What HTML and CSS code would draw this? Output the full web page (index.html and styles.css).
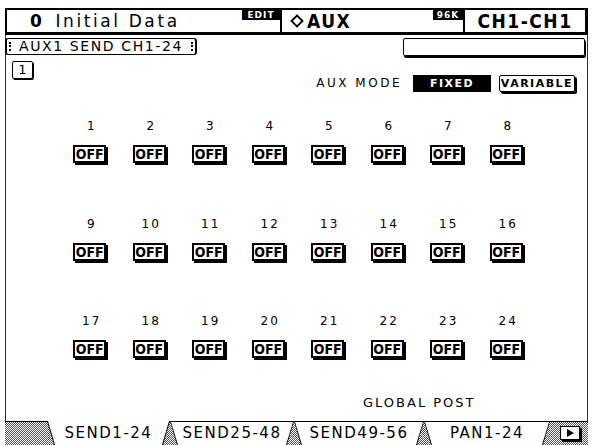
FILE: index.html
```html
<!DOCTYPE html>
<html>
<head>
<meta charset="utf-8">
<link rel="stylesheet" href="styles.css">
</head>
<body>
<div class="screen">
  <header class="hdr">
    <div class="seg seg-scene">
      <span class="scene-num">0</span><span class="scene-name">Initial Data</span>
      <span class="tag tag-edit">EDIT</span>
    </div>
    <div class="seg seg-func">
      <svg class="diamond" width="14" height="14" viewBox="0 0 14 14"><polygon points="7,1.5 12.5,7 7,12.5 1.5,7" fill="none" stroke="#000" stroke-width="1.8"/></svg>
      <span class="func">AUX</span>
      <span class="tag tag-96k">96K</span>
    </div>
    <div class="seg seg-ch"><span class="ch">CH1-CH1</span></div>
  </header>
  <main class="body">
    <div class="row-top">
      <div class="label-box"><span class="dots"></span><span class="label-text">AUX1 SEND CH1-24</span><span class="dots"></span></div>
      <div class="name-box"></div>
    </div>
    <div class="row-mode">
      <div class="page-box">1</div>
      <div class="mode">
        <span class="mode-label">AUX MODE</span>
        <span class="btn btn-on">FIXED</span>
        <span class="btn btn-off">VARIABLE</span>
      </div>
    </div>
    <div class="grid">
      <div class="cell"><span class="num">1</span><span class="off">OFF</span></div>
      <div class="cell"><span class="num">2</span><span class="off">OFF</span></div>
      <div class="cell"><span class="num">3</span><span class="off">OFF</span></div>
      <div class="cell"><span class="num">4</span><span class="off">OFF</span></div>
      <div class="cell"><span class="num">5</span><span class="off">OFF</span></div>
      <div class="cell"><span class="num">6</span><span class="off">OFF</span></div>
      <div class="cell"><span class="num">7</span><span class="off">OFF</span></div>
      <div class="cell"><span class="num">8</span><span class="off">OFF</span></div>
      <div class="cell"><span class="num">9</span><span class="off">OFF</span></div>
      <div class="cell"><span class="num">10</span><span class="off">OFF</span></div>
      <div class="cell"><span class="num">11</span><span class="off">OFF</span></div>
      <div class="cell"><span class="num">12</span><span class="off">OFF</span></div>
      <div class="cell"><span class="num">13</span><span class="off">OFF</span></div>
      <div class="cell"><span class="num">14</span><span class="off">OFF</span></div>
      <div class="cell"><span class="num">15</span><span class="off">OFF</span></div>
      <div class="cell"><span class="num">16</span><span class="off">OFF</span></div>
      <div class="cell"><span class="num">17</span><span class="off">OFF</span></div>
      <div class="cell"><span class="num">18</span><span class="off">OFF</span></div>
      <div class="cell"><span class="num">19</span><span class="off">OFF</span></div>
      <div class="cell"><span class="num">20</span><span class="off">OFF</span></div>
      <div class="cell"><span class="num">21</span><span class="off">OFF</span></div>
      <div class="cell"><span class="num">22</span><span class="off">OFF</span></div>
      <div class="cell"><span class="num">23</span><span class="off">OFF</span></div>
      <div class="cell"><span class="num">24</span><span class="off">OFF</span></div>
    </div>
    <div class="global">GLOBAL POST</div>
  </main>
  <nav class="tabs">
    <div class="tab-lead"></div>
    <div class="tab tab-active w1"><span>SEND1-24</span></div>
    <div class="tab w2"><span>SEND25-48</span></div>
    <div class="tab w3"><span>SEND49-56</span></div>
    <div class="tab w4"><span>PAN1-24</span></div>
    <div class="tab-gap"></div>
    <div class="next-btn"><svg width="10" height="10" viewBox="0 0 10 10"><polygon points="2,1 9,5 2,9" fill="#000"/></svg></div>
  </nav>
</div>
</body>
</html>
```
FILE: styles.css
```css
html, body {
  margin: 0;
  padding: 0;
  background: #fff;
}
body {
  font-family: "DejaVu Sans", "Liberation Sans", sans-serif;
  color: #000;
}
.screen {
  margin: 8px 0 0 5px;
  width: 583px;
  display: flex;
  flex-direction: column;
}

/* header */
.hdr {
  display: flex;
  height: 22px;
  border: 2px solid #000;
  border-right-width: 3px;
  border-bottom-width: 3px;
}
.seg {
  position: relative;
  display: flex;
  align-items: center;
}
.seg-scene {
  flex: 0 0 273px;
  padding-left: 23px;
  box-sizing: border-box;
  font-size: 17px;
  letter-spacing: 2.6px;
}
.scene-num {
  font-weight: bold;
  margin-right: 11px;
}
.seg-func {
  flex: 0 0 183px;
  box-sizing: border-box;
  border-left: 2px solid #000;
  padding-left: 8px;
}
.diamond {
  margin-right: 3px;
}
.func, .ch {
  font-weight: bold;
  font-stretch: condensed;
  font-family: "DejaVu Sans Condensed", "DejaVu Sans", sans-serif;
  font-size: 19px;
  letter-spacing: 1.5px;
}
.seg-ch {
  flex: 1;
  border-left: 2px solid #000;
  justify-content: center;
}
.tag {
  position: absolute;
  top: 0;
  right: 0;
  height: 10px;
  background: #000;
  color: #fff;
  font-size: 9px;
  font-weight: bold;
  line-height: 10px;
  letter-spacing: 1px;
  text-align: center;
}
.tag-edit { width: 38px; }
.tag-96k { width: 30px; }

/* body */
.body {
  height: 386px;
  border-left: 1px solid #333;
  border-right: 1px solid #333;
  display: flex;
  flex-direction: column;
}
.row-top {
  display: flex;
  justify-content: space-between;
  margin-top: 3px;
  height: 20px;
}
.label-box {
  margin-left: -1px;
  width: 192px;
  height: 17px;
  box-sizing: border-box;
  border: 1px solid #000;
  border-left-width: 2px;
  border-right-width: 2px;
  border-radius: 3px;
  display: flex;
  align-items: center;
  justify-content: space-between;
  padding: 0 2px;
  white-space: nowrap;
}
.label-text {
  font-size: 14px;
  line-height: 15px;
  letter-spacing: 1.6px;
}
.dots {
  width: 0;
  height: 9px;
  border-left: 2px dotted #000;
}
.name-box {
  width: 180px;
  height: 16px;
  margin-right: 2px;
  border: 1px solid #000;
  border-radius: 2px;
  box-shadow: 1px 2px 0 #000;
}
.row-mode {
  display: flex;
  justify-content: space-between;
  margin-top: 3px;
  height: 31px;
}
.page-box {
  margin-left: 6px;
  width: 19px;
  height: 16px;
  border: 1px solid #000;
  border-radius: 2px;
  box-shadow: 1px 1px 0 #000;
  font-size: 13px;
  line-height: 16px;
  text-align: center;
}
.mode {
  display: flex;
  align-items: center;
  align-self: flex-end;
  margin-right: 12px;
  height: 18px;
}
.mode-label {
  font-size: 12px;
  letter-spacing: 2.5px;
  margin-right: 11px;
}
.btn {
  height: 17px;
  box-sizing: border-box;
  font-size: 11px;
  line-height: 15px;
  letter-spacing: 1.5px;
  text-align: center;
  font-weight: bold;
}
.btn-on {
  width: 78px;
  background: #000;
  color: #fff;
  line-height: 17px;
  margin-right: 8px;
}
.btn-off {
  width: 76px;
  border: 1px solid #000;
  border-radius: 2px;
  box-shadow: 2px 2px 0 #000;
}

/* grid */
.grid {
  margin-top: 27px;
  margin-left: 55px;
  display: grid;
  grid-template-columns: repeat(8, 59.5px);
  row-gap: 53.5px;
}
.cell {
  display: flex;
  flex-direction: column;
  align-items: center;
}
.num {
  font-size: 12px;
  line-height: 14px;
  letter-spacing: 2px;
  margin-right: -2px;
}
.off {
  margin-top: 12px;
  width: 33px;
  height: 18px;
  box-sizing: border-box;
  border: 2px solid #000;
  box-shadow: 2px 2px 0 #000;
  font-family: "DejaVu Sans Condensed", "DejaVu Sans", sans-serif;
  font-stretch: condensed;
  font-weight: bold;
  font-size: 14px;
  line-height: 14px;
  text-align: center;
  margin-right: 2px;
}
.global {
  margin-top: auto;
  margin-bottom: 10px;
  margin-left: 357px;
  font-size: 13px;
  line-height: 16px;
  letter-spacing: 2px;
}

/* tabs */
.tabs {
  display: flex;
  height: 24px;
  background:
    linear-gradient(#000, #000) top left / 100% 1px no-repeat,
    repeating-conic-gradient(#555 0 25%, #fff 0 50%) 0 0 / 2px 2px;
}
.tab-lead { flex: 0 0 42px; }
.tab {
  position: relative;
  height: 24px;
  background: #000;
  clip-path: polygon(0 0, 100% 0, calc(100% - 7px) 100%, 7px 100%);
  display: flex;
  align-items: center;
  justify-content: center;
  font-size: 15px;
  letter-spacing: 1.5px;
}
.tab::before {
  content: "";
  position: absolute;
  inset: 1px 1px 0 1px;
  background: #fff;
  clip-path: polygon(0 0, 100% 0, calc(100% - 7px) 100%, 7px 100%);
}
.tab-active::before { inset: 0 1px 0 1px; }
.tab span { position: relative; }
.w1 { flex: 0 0 123px; }
.w2 { flex: 0 0 124px; }
.w3 { flex: 0 0 130px; }
.w4 { flex: 0 0 126px; }
.tab-gap { flex: 0 0 10px; }
.next-btn {
  margin-top: 5px;
  width: 18px;
  height: 12px;
  background: #fff;
  border: 1px solid #000;
  box-shadow: 2px 2px 0 #000;
  display: flex;
  align-items: center;
  justify-content: center;
}
```
